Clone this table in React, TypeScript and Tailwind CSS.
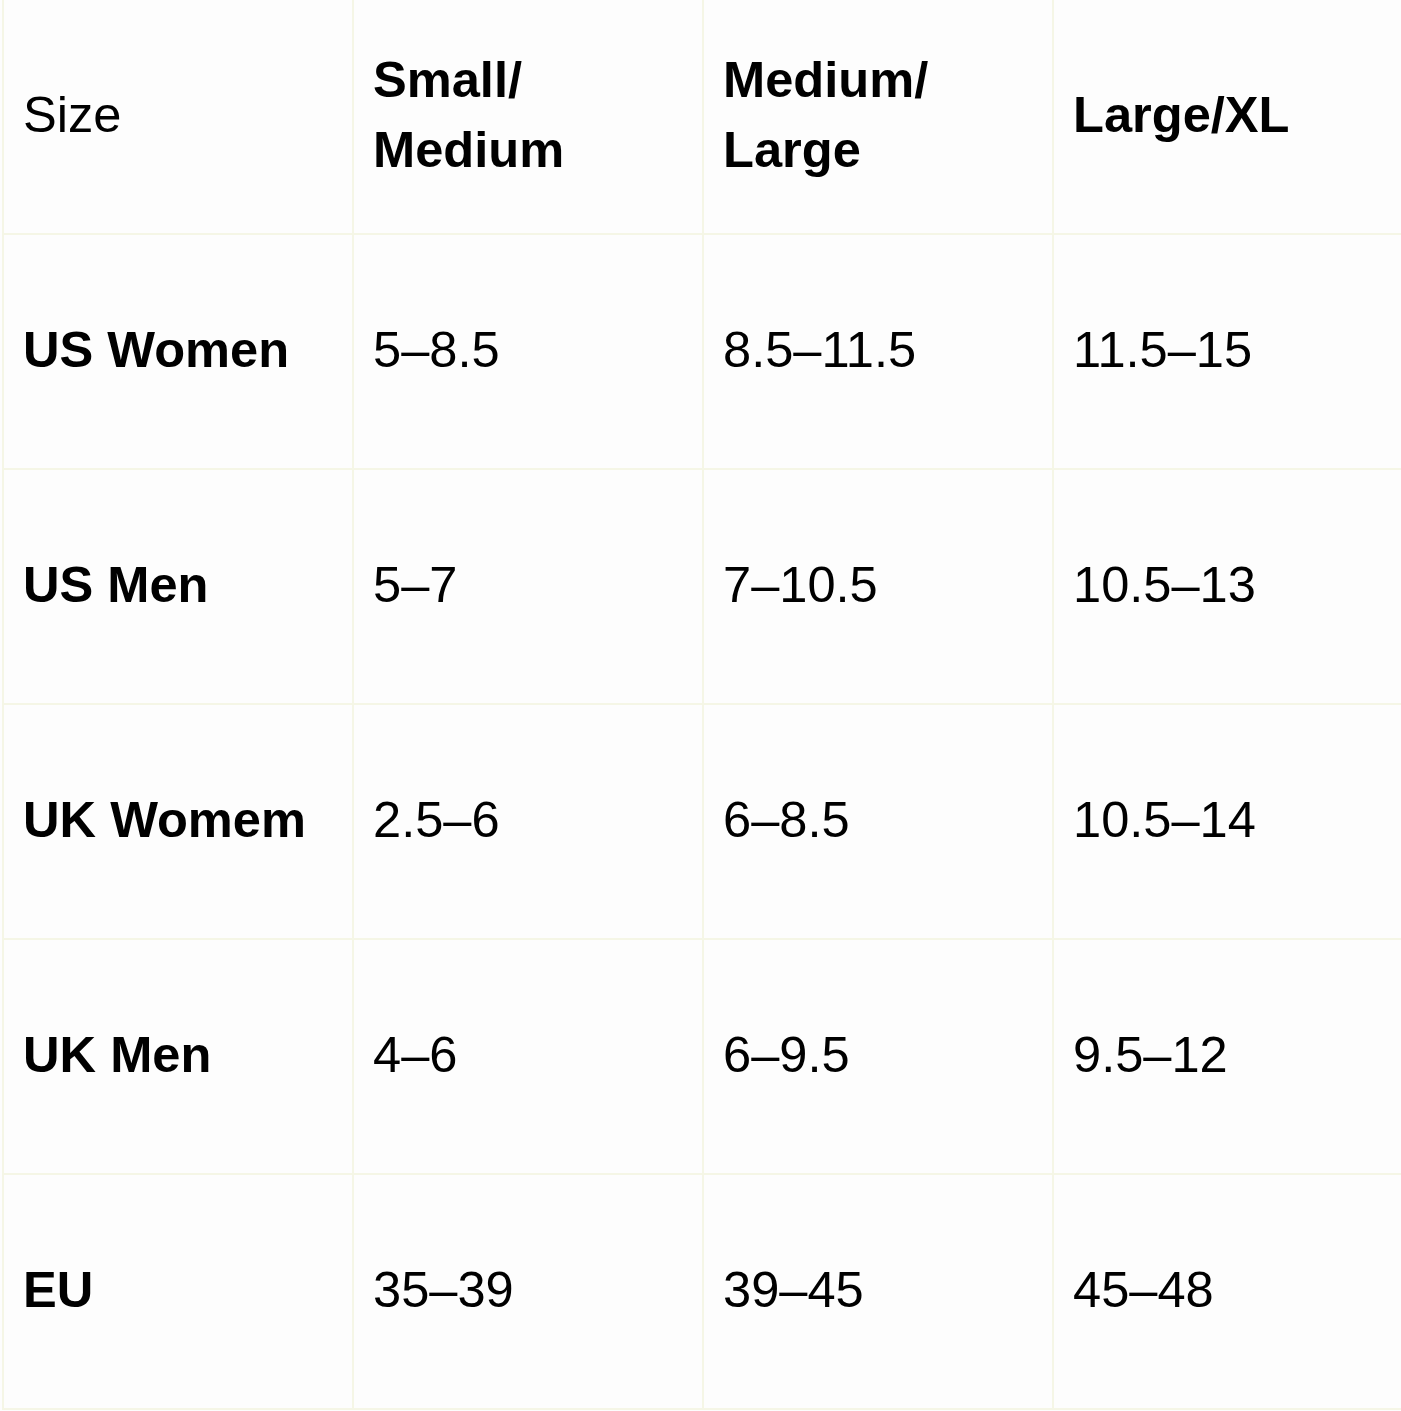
import React from "react";

const header: React.ReactNode[] = [
  "Size",
  <>Small/<br />Medium</>,
  <>Medium/<br />Large</>,
  "Large/XL",
];

const rows: string[][] = [
  ["US Women", "5–8.5", "8.5–11.5", "11.5–15"],
  ["US Men", "5–7", "7–10.5", "10.5–13"],
  ["UK Womem", "2.5–6", "6–8.5", "10.5–14"],
  ["UK Men", "4–6", "6–9.5", "9.5–12"],
  ["EU", "35–39", "39–45", "45–48"],
];

export default function App() {
  return (
    <div
      className="w-[1401px] h-[1411px] overflow-hidden bg-[#fdfdfd] text-black"
      style={{ fontFamily: '"Liberation Sans", Arial, sans-serif' }}
    >
      <div className="ml-[2px] w-[1404px] border-l-2 border-[#f5f6e6] grid grid-cols-[350px_350px_350px_350px]">
        {header.map((h, i) => (
          <div
            key={"h" + i}
            className={`h-[235px] border-r-2 border-b-2 border-[#f5f6e6] flex items-center pl-[19px] pb-[4px] text-[50.6px] leading-[70px] ${
              i === 0 ? "font-normal" : "font-bold"
            }`}
          >
            <div>{h}</div>
          </div>
        ))}
        {rows.map((r, ri) =>
          r.map((c, ci) => (
            <div
              key={ri + "-" + ci}
              className={`h-[235px] border-r-2 border-b-2 border-[#f5f6e6] flex items-center pl-[19px] pb-[4px] text-[50.6px] leading-[70px] ${
                ci === 0 ? "font-bold" : "font-normal"
              }`}
            >
              <div>{c}</div>
            </div>
          ))
        )}
      </div>
    </div>
  );
}
